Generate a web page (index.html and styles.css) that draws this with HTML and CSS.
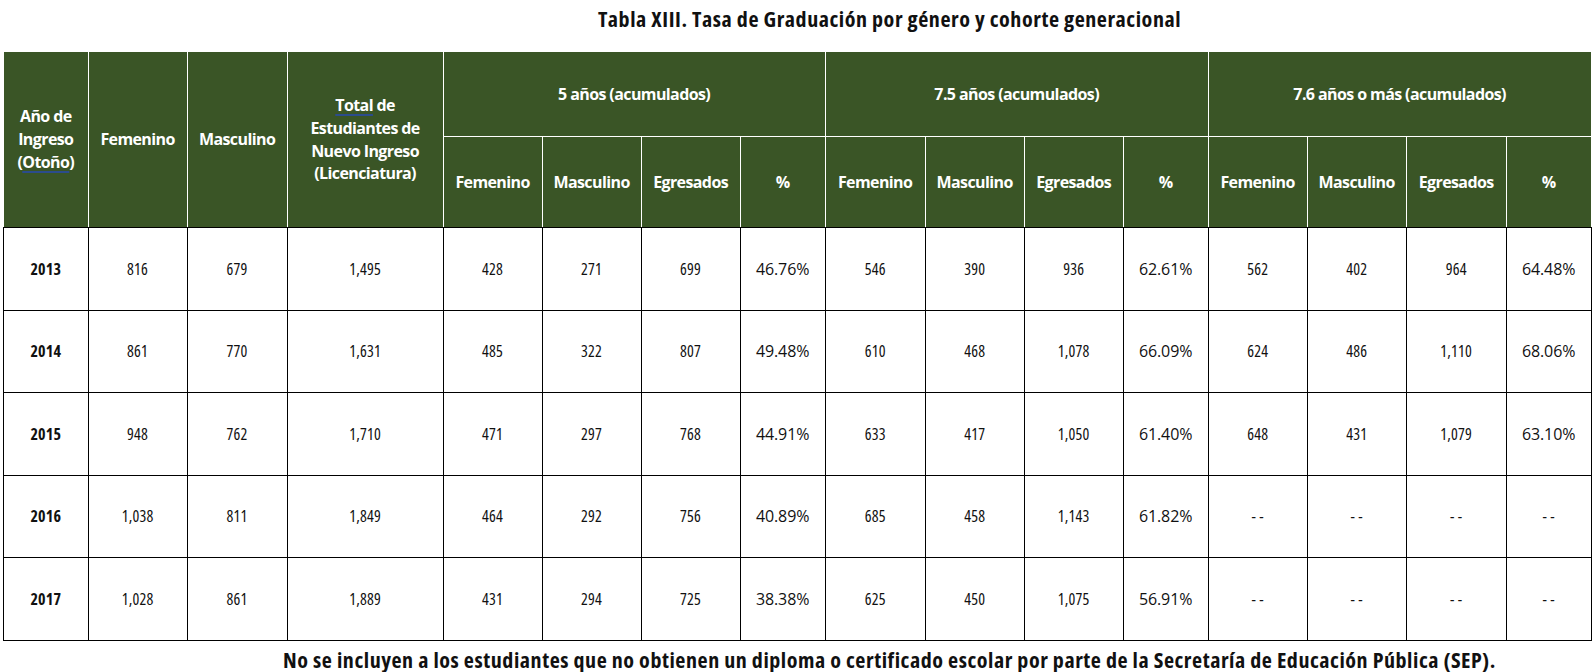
FILE: index.html
```html
<!DOCTYPE html>
<html lang="es">
<head>
<meta charset="utf-8">
<link rel="stylesheet" href="styles.css">
</head>
<body>
<div class="page">
  <h1 class="title">Tabla XIII. Tasa de Graduación por género y cohorte generacional</h1>
  <table class="grad">
    <colgroup>
      <col class="w-year"><col class="w-99"><col class="w-100"><col class="w-total">
      <col class="w-99"><col class="w-99"><col class="w-99"><col class="w-pct">
      <col class="w-100"><col class="w-99"><col class="w-99"><col class="w-pct">
      <col class="w-99"><col class="w-99"><col class="w-100"><col class="w-pct">
    </colgroup>
    <thead>
      <tr class="h1">
        <th rowspan="2" class="edge">Año de<br>Ingreso<br>(<span class="ul">Otoño</span>)</th>
        <th rowspan="2" class="edge">Femenino</th>
        <th rowspan="2" class="edge">Masculino</th>
        <th rowspan="2" class="edge"><span class="ul">Total</span> de<br>Estudiantes de<br>Nuevo Ingreso<br>(Licenciatura)</th>
        <th colspan="4">5 años (acumulados)</th>
        <th colspan="4">7.5 años (acumulados)</th>
        <th colspan="4">7.6 años o más (acumulados)</th>
      </tr>
      <tr class="h2">
        <th>Femenino</th><th>Masculino</th><th>Egresados</th><th>%</th>
        <th>Femenino</th><th>Masculino</th><th>Egresados</th><th>%</th>
        <th>Femenino</th><th>Masculino</th><th>Egresados</th><th>%</th>
      </tr>
    </thead>
    <tbody>
      <tr>
        <td class="yr">2013</td><td>816</td><td>679</td><td>1,495</td>
        <td>428</td><td>271</td><td>699</td><td class="pct">46.76%</td>
        <td>546</td><td>390</td><td>936</td><td class="pct">62.61%</td>
        <td>562</td><td>402</td><td>964</td><td class="pct">64.48%</td>
      </tr>
      <tr>
        <td class="yr">2014</td><td>861</td><td>770</td><td>1,631</td>
        <td>485</td><td>322</td><td>807</td><td class="pct">49.48%</td>
        <td>610</td><td>468</td><td>1,078</td><td class="pct">66.09%</td>
        <td>624</td><td>486</td><td>1,110</td><td class="pct">68.06%</td>
      </tr>
      <tr>
        <td class="yr">2015</td><td>948</td><td>762</td><td>1,710</td>
        <td>471</td><td>297</td><td>768</td><td class="pct">44.91%</td>
        <td>633</td><td>417</td><td>1,050</td><td class="pct">61.40%</td>
        <td>648</td><td>431</td><td>1,079</td><td class="pct">63.10%</td>
      </tr>
      <tr>
        <td class="yr">2016</td><td>1,038</td><td>811</td><td>1,849</td>
        <td>464</td><td>292</td><td>756</td><td class="pct">40.89%</td>
        <td>685</td><td>458</td><td>1,143</td><td class="pct">61.82%</td>
        <td>- -</td><td>- -</td><td>- -</td><td>- -</td>
      </tr>
      <tr>
        <td class="yr">2017</td><td>1,028</td><td>861</td><td>1,889</td>
        <td>431</td><td>294</td><td>725</td><td class="pct">38.38%</td>
        <td>625</td><td>450</td><td>1,075</td><td class="pct">56.91%</td>
        <td>- -</td><td>- -</td><td>- -</td><td>- -</td>
      </tr>
    </tbody>
  </table>
  <p class="note">No se incluyen a los estudiantes que no obtienen un diploma o certificado escolar por parte de la Secretaría de Educación Pública (SEP).</p>
</div>
</body>
</html>
```
FILE: styles.css
```css
html, body {
  margin: 0;
  padding: 0;
  background: #ffffff;
}

.page {
  padding: 5px 4px 0 3px;
  font-family: "Open Sans", "Noto Sans", sans-serif;
  color: #111111;
}

.title {
  margin: 0 0 20px 0;
  padding-left: 186px;
  text-align: center;
  font-size: 22px;
  line-height: 26px;
  font-weight: 700;
  font-stretch: 75%;
  letter-spacing: 0.55px;
  color: #111111;
}

.grad {
  border-collapse: collapse;
  table-layout: fixed;
  width: 1587px;
}

.w-year { width: 84.6px; }
.w-99 { width: 99px; }
.w-100 { width: 100px; }
.w-total { width: 156px; }
.w-pct { width: 85px; }

.grad th {
  background: #3a5526;
  color: #ffffff;
  border: 1px solid #ffffff;
  font-size: 16px;
  font-weight: 750;
  font-stretch: 100%;
  letter-spacing: -0.6px;
  line-height: 22.7px;
  text-align: center;
  vertical-align: middle;
  padding: 0 1px;
}

.grad .h1 th { height: 84px; }
.grad .h2 th { height: 90px; border-bottom: 1px solid #000000; }
.grad th.edge { border-bottom: 1px solid #000000; }

.ul {
  text-decoration: underline;
  text-decoration-color: #2b4c8c;
  text-decoration-thickness: 2px;
  text-underline-offset: 3px;
}

.grad td {
  border: 1px solid #000000;
  height: 81.5px;
  padding: 0 2px;
  text-align: center;
  vertical-align: middle;
  font-size: 16px;
  font-stretch: 75%;
  letter-spacing: 0.2px;
  color: #111111;
  white-space: nowrap;
}

.grad td.yr {
  font-weight: 700;
}

.grad td.pct {
  font-stretch: 100%;
  letter-spacing: -0.1px;
}

.note {
  margin: 5px 0 0 0;
  padding-left: 186px;
  text-align: center;
  font-size: 22px;
  line-height: 26px;
  font-weight: 700;
  font-stretch: 75%;
  letter-spacing: 0.55px;
  color: #111111;
}
```
